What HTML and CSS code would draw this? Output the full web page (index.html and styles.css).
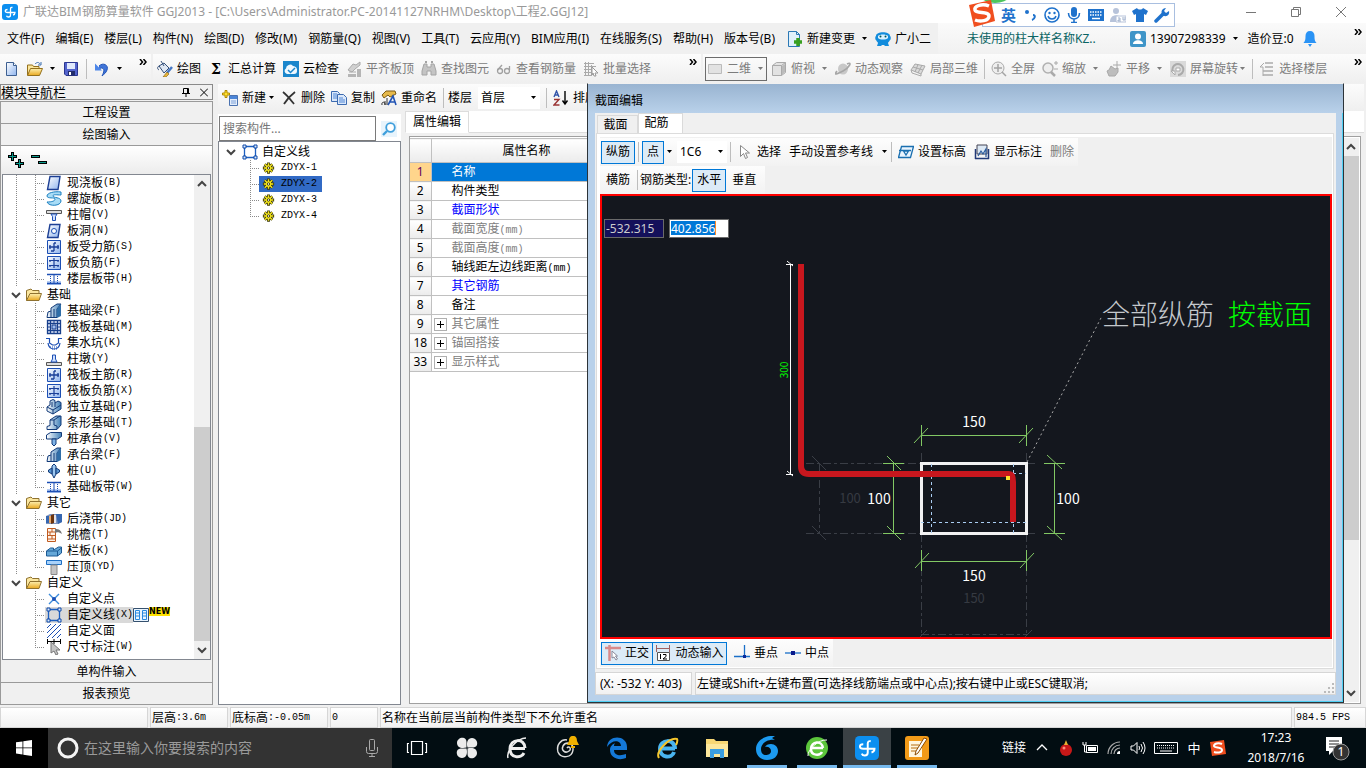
FILE: index.html
```html
<!DOCTYPE html>
<html lang="zh-CN">
<head>
<meta charset="utf-8">
<title>广联达BIM钢筋算量软件 GGJ2013</title>
<link rel="stylesheet" href="styles.css">
</head>
<body>
<svg class="defs" aria-hidden="true">
  <defs>
    <linearGradient id="gBlue" x1="0" y1="0" x2="1" y2="1"><stop offset="0" stop-color="#fff"/><stop offset="1" stop-color="#8fb4ee"/></linearGradient>
    <linearGradient id="gSteel" x1="0" y1="0" x2="1" y2="0"><stop offset="0" stop-color="#fff"/><stop offset="1" stop-color="#3f7fb8"/></linearGradient>
    <linearGradient id="gFold" x1="0" y1="0" x2="0" y2="1"><stop offset="0" stop-color="#fdf0b0"/><stop offset="1" stop-color="#e9a820"/></linearGradient>
  </defs>
  <symbol id="caret" viewBox="0 0 7 4"><path d="M1 0h5L3.500 3z" fill="currentColor"/></symbol>
  <symbol id="more" viewBox="0 0 8 6"><path d="M1 0l2.500 3L1 6M4.500 0L7 3 4.500 6" fill="none" stroke="#000" stroke-width="1.500"/></symbol>
  <symbol id="chev" viewBox="0 0 10 10"><path d="M1 3l4 4 4-4" fill="none" stroke="#444" stroke-width="2"/></symbol>
  <symbol id="app" viewBox="0 0 16 16"><rect width="16" height="16" rx="3" fill="#0c8ff0"/><path d="M10.500 3.500Q8.500 3 8.500 5V11q0 2-2 2-1.500 0-2-1.300M5.500 5.500Q3.300 5.500 3.300 7 3.300 8.500 5.500 8.500H13q0 2-2 2.500" fill="none" stroke="#fff" stroke-width="1.300"/></symbol>
  <symbol id="new" viewBox="0 0 16 16"><path d="M2.500 1.500h7l3 3v10h-10z" fill="url(#gBlue)" stroke="#3d5f91"/><path d="M9.500 1.500v3h3" fill="#fff" stroke="#3d5f91"/></symbol>
  <symbol id="open" viewBox="0 0 16 16"><path d="M.5 14V4h5l1 1.500H12V8" fill="#fbe59a" stroke="#94701c"/><path d="M.5 14.500l3-7H15.500l-3 7z" fill="url(#gFold)" stroke="#94701c"/><path d="M8 3c2-2 4-2 5 0M14 1v3h-3" fill="none" stroke="#3b6eb0"/></symbol>
  <symbol id="save" viewBox="0 0 16 16"><path d="M1.500 1.500h13v13H3l-1.500-1.500z" fill="#5263cc" stroke="#2a3590"/><path d="M4 2h8v6H4z" fill="#dfe8fb"/><path d="M5 10h7v4.500H5z" fill="#222c6b"/><path d="M6 11h2v3H6z" fill="#fff"/></symbol>
  <symbol id="undo" viewBox="0 0 16 16"><path d="M5 5c4-4 10-1 8 4-1 3-3 4-5 6 2-4 3-7 0-8-1 0-2 0-3 2" fill="#3f74d8" stroke="#2456b8"/><path d="M1 2.500V9.500h7z" fill="#4d86e8"/></symbol>
  <symbol id="paint" viewBox="0 0 16 16"><path d="M2 5l5-3 5 5-5 5z" fill="#dfe7f2" stroke="#35507a"/><path d="M3 5c-3 0-3 3-1 4M4 0l3 5" stroke="#35507a" fill="none"/><path d="M15 6l-5 6" stroke="#4778c4" stroke-width="2.500"/><path d="M10 11l2 2-3 3H6z" fill="#e9b63a" stroke="#7c5a12" stroke-width=".6"/></symbol>
  <symbol id="cloudchk" viewBox="0 0 16 16"><path d="M0 0h16v16H0z" fill="#1a86cc"/><path d="M4 13a3 3 0 0 1-1-5.500A4 4 0 0 1 10 5a4 4 0 0 1 4 5c0 2-1 3-3 3z" fill="#eef8ff"/><path d="M5 9l2.500 2.500L12 7" fill="none" stroke="#1a86cc" stroke-width="1.500"/></symbol>
  <symbol id="slab" viewBox="0 0 16 16"><path d="M2 9l5-6 3 1 4-3v3L9 8 6 11z" fill="#d0d0d0" stroke="#aaa"/><path d="M2 13h8v3H2zM11 8h4v8h-4z" fill="#b5b5b5"/><path d="M3 11h7" stroke="#aaa"/></symbol>
  <symbol id="bino" viewBox="0 0 16 16"><path d="M3 3h3v3h4V3h3l2 7v4h-5v-4H6v4H1v-4z" fill="#c4c4c4" stroke="#a4a4a4"/><path d="M4 1h2M10 1h2" stroke="#a4a4a4" stroke-width="2"/></symbol>
  <symbol id="glass" viewBox="0 0 16 16"><g fill="none" stroke="#a0a0a0" stroke-width="1.300"><circle cx="4" cy="10" r="2.500"/><circle cx="11" cy="10" r="2.500"/><path d="M1.500 9L6 4M13.500 9V5"/></g></symbol>
  <symbol id="batch" viewBox="0 0 16 16"><path d="M1 2.500h10M1 5.500h12M1 8.500h8M1 11.500h8M1 14.500h8M2.500 1v14M5.500 1v14M8.500 4v10" fill="none" stroke="#aaa"/><path d="M9 6l6 6h-3l1 3-2 0-1-3-1 2z" fill="#fff" stroke="#999"/></symbol>
  <symbol id="flat" viewBox="0 0 16 16"><path d="M1.500 3.500h13v9h-13z" fill="#e2e2e2" stroke="#bbb"/></symbol>
  <symbol id="cube" viewBox="0 0 16 16"><path d="M1.500 4.500l4-3h9v10l-4 3h-9z" fill="#e2e2e2" stroke="#aaa"/><path d="M1.500 4.500h9v10M10.500 4.500l4-3" fill="none" stroke="#aaa"/><path d="M11 5l3-2v8l-3 3z" fill="#bbb"/></symbol>
  <symbol id="orbit" viewBox="0 0 16 16"><ellipse cx="8" cy="8" rx="5" ry="5.500" fill="#c8c8c8"/><path d="M12 3c6-3 2 4-4 7s-10 5-6 0" fill="none" stroke="#a6a6a6" stroke-width="1.600"/></symbol>
  <symbol id="local3" viewBox="0 0 16 16"><path d="M1 9l4-6 10 2-4 8z" fill="#dadada" stroke="#aaa"/><path d="M3 6l10 3M8 3.500L5 11M12 4L8 12M1 9l1 3 9 3v-2" fill="none" stroke="#aaa"/></symbol>
  <symbol id="full" viewBox="0 0 16 16"><circle cx="7" cy="7" r="6" fill="#eee" stroke="#aaa"/><path d="M7 3v8M3 7h8M11 11l4 4" stroke="#a4a4a4" stroke-width="1.500"/></symbol>
  <symbol id="zoomi" viewBox="0 0 16 16"><circle cx="6" cy="7" r="5" fill="#eee" stroke="#b0b0b0" stroke-width="1.500"/><path d="M9 11l4 4" stroke="#aaa" stroke-width="2.500"/><path d="M12 2h4M14 0v4M12 8h4" stroke="#aaa"/></symbol>
  <symbol id="pan" viewBox="0 0 16 16"><path d="M3 15L1 10l2-1 2-4 4 3 3-1v4l-3 4z" fill="#bdbdbd" stroke="#a8a8a8"/><path d="M11 0v8M7 4h8" stroke="#aaa"/></symbol>
  <symbol id="rot" viewBox="0 0 16 16"><path d="M0 0h16v16H0z" fill="#dadada"/><path d="M3 11A5.500 5.500 0 1 1 8 14" fill="none" stroke="#aaa" stroke-width="2"/><path d="M6 7h4v3H6zM1 10h4v4z" fill="#fff" stroke="#aaa"/></symbol>
  <symbol id="floor" viewBox="0 0 16 16"><path d="M6 2h8M6 6h8M4 10h10M4 14h10" stroke="#aaa" stroke-width="1.500"/><path d="M5 2L1 6h3v9" fill="none" stroke="#aaa"/></symbol>
  <symbol id="docplus" viewBox="0 0 16 16"><path d="M1.500.5h8l3 3v12h-11z" fill="#dff0fb" stroke="#2b78b5"/><path d="M9.500.5v3h3" fill="none" stroke="#2b78b5"/><path d="M11 7v8M7 11h8" stroke="#38a020" stroke-width="3.500"/></symbol>
  <symbol id="robot" viewBox="0 0 16 16"><path d="M1 5c0-5 14-5 14 0 1 0 1 4 0 4-1 2-2 2-2 3l1 3H9.500v-1h-3v1H2l1-3c0-1-1-1-2-3-1 0-1-4 0-4z" fill="#128cdc"/><path d="M3 5c2-2 8-2 10 0v2c-2 2-8 2-10 0z" fill="#d9f1ff"/><circle cx="5.500" cy="5.500" r="1" fill="#055"/><circle cx="10.500" cy="5.500" r="1" fill="#055"/></symbol>
  <symbol id="user" viewBox="0 0 16 16"><rect width="16" height="16" rx="2" fill="#3f95c8"/><circle cx="8" cy="5.500" r="3" fill="#fff"/><path d="M3 13c0-5 10-5 10 0z" fill="#fff"/></symbol>
  <symbol id="bell" viewBox="0 0 16 16"><path d="M8 0c3 0 4.500 2 4.500 5 0 4 .5 5 2 7h-13c1.500-2 2-3 2-7C3.500 2 5 0 8 0z" fill="#2a93f5"/><path d="M6 13h4l-2 3z" fill="#2a93f5"/></symbol>
  <symbol id="additem" viewBox="0 0 16 16"><path d="M7.500 5.500h8v10h-8z" fill="#e3edfb" stroke="#4a72b0"/><path d="M8 6h7v3H8z" fill="#4c86d8"/><path d="M9 11h5M9 13h5" stroke="#7ea2d8"/><path d="M3 .5h2V3h2.500v2H5v2.500H3V5H.500V3H3z" fill="#ffe02e" stroke="#b08800"/></symbol>
  <symbol id="del" viewBox="0 0 16 16"><path d="M2 2c4 3 7 7 11 12M14 2C10 5 6 9 3 14" fill="none" stroke="#333" stroke-width="1.800"/></symbol>
  <symbol id="copy" viewBox="0 0 16 16"><path d="M.5 1.500h6l2 2v8h-8z" fill="#dbe8fa" stroke="#3d6bb0"/><path d="M6.500 4.500h6l3 3v7h-9z" fill="#dbe8fa" stroke="#3d6bb0"/><path d="M2 4h4M2 6h4M2 8h4M8 8h4M8 10h6M8 12h6" stroke="#4f86d6"/></symbol>
  <symbol id="ren" viewBox="0 0 16 16"><path d="M1 5l4-4h9l1 3-6 3-2-2-4 3z" fill="#e6b94a" stroke="#7a5a16"/><path d="M7 15l5-9 3 9M9 12h5" fill="none" stroke="#2254b4" stroke-width="1.600"/><path d="M1 15c-1-3 3-4 3-1v1M4 11v4M6 8v7" fill="none" stroke="#333"/></symbol>
  <symbol id="az" viewBox="0 0 16 16"><path d="M1 7l2.500-6L6 7M2 5h3" fill="none" stroke="#3355aa" stroke-width="1.400"/><path d="M1 9.500h5L1 15h5.500" fill="none" stroke="#993333" stroke-width="1.400"/><path d="M12 1v12M9.500 10.500L12 14l2.500-3.500" fill="none" stroke="#000" stroke-width="1.400"/></symbol>
  <symbol id="mag" viewBox="0 0 16 16"><path d="M0 0h16v16H0z" fill="#e8f4fc"/><circle cx="9.500" cy="6.500" r="4.300" fill="#fff" stroke="#3f9fdc" stroke-width="1.800"/><path d="M6 10l-4 4" stroke="#3f9fdc" stroke-width="2.400"/></symbol>
  <symbol id="plus2" viewBox="0 0 16 16"><path d="M4.500 0v9M0 4.500h9M11.500 7v9M7 11.500h9" stroke="#000" stroke-width="3"/><path d="M4.500 1v7M1 4.500h7M11.500 8v7M8 11.500h7" stroke="#0a9a8c"/></symbol>
  <symbol id="minus2" viewBox="0 0 16 16"><path d="M0 4.500h9M7 10.500h9" stroke="#000" stroke-width="3"/><path d="M1 4.500h7M8 10.500h7" stroke="#0a9a8c"/></symbol>
  <symbol id="folder" viewBox="0 0 16 16"><path d="M.5 13.500v-10L5 2l1.500 1.500H13V6" fill="#fbe7a0" stroke="#8f7230"/><path d="M.5 13.500L4 6.500h11.500l-2.500 7z" fill="url(#gFold)" stroke="#8f7230"/></symbol>
  <symbol id="t1" viewBox="0 0 16 16"><path d="M4 1.500h10L12 14.500H1.500z" fill="url(#gBlue)" stroke="#1c3f94" stroke-width="1.400"/></symbol>
  <symbol id="t2" viewBox="0 0 16 16"><path d="M15 1C8 0 1 2 1 5s8 1 8 3-3 3-8 3c2 5 14 4 14-1 0-4-8-3-8-5s4-1 8-1z" fill="#a8dcf6" stroke="#1a7fc0"/></symbol>
  <symbol id="t3" viewBox="0 0 16 16"><path d="M.5 3.500h15v3H.500z" fill="#ddd" stroke="#555"/><path d="M5 7h6L9.500 9.500v4h-3v-4z" fill="#cfe0ff" stroke="#1c4fb4"/></symbol>
  <symbol id="t4" viewBox="0 0 16 16"><path d="M4 1.500h10L12 14.500H1.500z" fill="url(#gBlue)" stroke="#1c3f94" stroke-width="1.400"/><circle cx="8" cy="8" r="2.500" fill="#fff" stroke="#1c4fb4"/></symbol>
  <symbol id="t5" viewBox="0 0 16 16"><path d="M1.500 1.500h13v13h-13z" fill="url(#gBlue)" stroke="#1c4fb4"/><path d="M3 8h10M4 6v4M8 4v8M8 4h2M5 12h3M12 6v4" fill="none" stroke="#1a3f98" stroke-width="1.300"/></symbol>
  <symbol id="t6" viewBox="0 0 16 16"><path d="M1.500 1.500h13v13h-13z" fill="url(#gBlue)" stroke="#1c4fb4"/><path d="M8 3v10M3 5.500h10M3 10.500h10M4 5v2M12 5v2M4 10v2M12 10v2" fill="none" stroke="#1a3f98" stroke-width="1.200"/></symbol>
  <symbol id="t7" viewBox="0 0 16 16"><path d="M1 10h14v4H1z" fill="#b8cef4"/><path d="M1 3.500h14M1 12.500h14" stroke="#1c4fb4" stroke-width="1.400"/><path d="M4.500 3v9M11.500 3v9" stroke="#1c4fb4" stroke-dasharray="1 1"/><path d="M8 3v9" stroke="#1c4fb4"/></symbol>
  <symbol id="t8" viewBox="0 0 16 16"><path d="M1 14.500L2 9l3-1V5l6-4h4l-4 5v8.500z" fill="url(#gSteel)" stroke="#123a78"/><path d="M11 6l4-5v12l-4 2z" fill="#2f6ea8"/><path d="M5 8v6M8 6v8" stroke="#123a78"/></symbol>
  <symbol id="t9" viewBox="0 0 16 16"><path d="M1.500 1.500h13v13h-13zM4.500 1v14M11.500 1v14M1 4.500h14M1 11.500h14" fill="#eaf1ff" stroke="#173f8c" stroke-width="1.300"/><path d="M6 6h4v4H6zM8 1v4M8 11v4M1 8h4M11 8h4" fill="#9dbcf0" stroke="#173f8c"/></symbol>
  <symbol id="t10" viewBox="0 0 16 16"><path d="M0 3.500h3.500V8l3 2h3l3-2V3.500H16M2 8c1 8 11 8 12 0" fill="none" stroke="#1c4fb4" stroke-width="1.200"/><path d="M4 12h8M6 14h5" stroke="#1c4fb4" stroke-dasharray="1 1"/></symbol>
  <symbol id="t11" viewBox="0 0 16 16"><path d="M.5 11.500h15v3H.500z" fill="#ddd" stroke="#555"/><path d="M5 11l1.500-3V4h3v4l1.500 3z" fill="#cfe0ff" stroke="#1c4fb4"/></symbol>
  <symbol id="t12" viewBox="0 0 16 16"><path d="M1 8l3-2V2l3-1.500 2 1V4l3-2 3 1.500V10l-8 5-6-3z" fill="url(#gSteel)" stroke="#123a78"/><path d="M1 8l6 3 8-5M7 11v4M6 3v5M9 4v4" fill="none" stroke="#123a78"/></symbol>
  <symbol id="t13" viewBox="0 0 16 16"><path d="M1 14.500v-3l3-1V5l6-4h5v9l-4 4.500z" fill="url(#gSteel)" stroke="#123a78"/><path d="M4 5h4v5l3 1v3M8 5l6-4" fill="none" stroke="#123a78"/></symbol>
  <symbol id="t14" viewBox="0 0 16 16"><path d="M.5 4l4-2.500h11v4l-4 2.500H.500z" fill="url(#gSteel)" stroke="#123a78"/><path d="M6 8v5l2 2 2-2V8z" fill="#7fb4e8" stroke="#123a78"/></symbol>
  <symbol id="t15" viewBox="0 0 16 16"><path d="M8 1l2 2v8l-2 4-2-4V3z" fill="#9cc8f0" stroke="#123a78"/><path d="M2.500 7l3.500-2v6L2.500 9zM13.500 7L10 5v6l3.500-2z" fill="#5a96d0" stroke="#123a78"/></symbol>
  <symbol id="t16" viewBox="0 0 16 16"><path d="M0 5l4-2h12v8l-4 2H0z" fill="#7c94c0"/><path d="M5 4l3-1v9l-3 1z" fill="#6b3510"/><path d="M0 5h5v7H0zM10 3h6v8l-4 2z" fill="#3566b0"/><path d="M3 5h2v7H3z" fill="#e8a868"/><path d="M8 4h2v8H8z" fill="#e4e4ec"/></symbol>
  <symbol id="t17" viewBox="0 0 16 16"><path d="M1.500 1.500h8v13h-8zM1 5h9M1 8.500h9M1 12h9M6 2v3M4 5v3M6 9v3" fill="#fff2e6" stroke="#c05a20"/><path d="M9 2c4 0 6 1 7 5-3-2-5-2-7-1z" fill="#777"/></symbol>
  <symbol id="t18" viewBox="0 0 16 16"><path d="M.5 8l4-3h3v2l5-3h3v6l-4 3H.500z" fill="#66a8d8" stroke="#1c5a94"/><path d="M.5 8h11v5M11.500 8l4-3" fill="none" stroke="#1c5a94"/></symbol>
  <symbol id="t19" viewBox="0 0 16 16"><path d="M.5 1.500h15v4H.500z" fill="#a9d2fa" stroke="#1c6fc4"/><path d="M5 6h6v9.500H5z" fill="#c4c4c4" stroke="#888"/></symbol>
  <symbol id="t20" viewBox="0 0 16 16"><path d="M3 3l10 10M13 3L3 13" stroke="#3a8ada" stroke-width="1.400"/><circle cx="8" cy="8" r="2" fill="#1c4fb4"/></symbol>
  <symbol id="t21" viewBox="0 0 16 16"><path d="M2.500 2.500h11v11h-11z" fill="none" stroke="#1c5fc0" stroke-width="1.300"/><path d="M1 1h3v3H1zM12 1h3v3h-3zM1 12h3v3H1zM12 12h3v3h-3z" fill="#dce9fb" stroke="#0c48a8"/></symbol>
  <symbol id="t22" viewBox="0 0 16 16"><path d="M1 5l4-4M1 10l9-9M1 15L15 1M6 15l9-9M11 15l4-4" stroke="#1c4fb4"/></symbol>
  <symbol id="t23" viewBox="0 0 16 16"><path d="M1 2.500h14M1.500 0v5M14.500 0v5M8 0v5" stroke="#000"/><path d="M5 3v11l3-2 2 4 2-1-2-4h4z" fill="#c4c4c4" stroke="#777"/></symbol>
  <symbol id="tcols" viewBox="0 0 16 16"><path d="M.5 1.500h15v13H.500z" fill="#eaf5ff" stroke="#35506e"/><path d="M2.500 3.500h4v9h-4zM9.500 3.500h4v9h-4zM2 6h5M9 6h5M2 9h5M9 9h5" fill="none" stroke="#2a8ae0"/></symbol>
  <symbol id="gear" viewBox="0 0 16 16"><g stroke="#3a3600" stroke-width="3"><path d="M8 2v12M2 8h12M4 4l8 8M12 4l-8 8"/></g><path d="M8 3v10M3 8h10M4 4l8 8M12 4l-8 8" stroke="#f4e61e" stroke-width="1.400"/><circle cx="8" cy="8" r="3" fill="#f4e61e"/><circle cx="8" cy="8" r="1.300" fill="#fff" stroke="#3a3600"/></symbol>
  <symbol id="cur" viewBox="0 0 16 16"><path d="M3.500 1.500v11l3-3 2 5 2-1-2-4.500h4z" fill="#fff" stroke="#888"/></symbol>
  <symbol id="elev" viewBox="0 0 16 16"><path d="M3.500 2.500h12l-3 11H.500z" fill="#eaf5ff" stroke="#1a6fb0" stroke-width="1.300"/><path d="M1 6.500h12M5.500 7l2.500 4 2.500-4z" stroke="#1a6fb0" fill="none" stroke-width="1.300"/></symbol>
  <symbol id="showdim" viewBox="0 0 16 16"><path d="M3 1h10v9H3z" fill="#dce8f4" stroke="#445"/><path d="M1.500 5v10M14.500 5v10M1 14.500h14" stroke="#223a78" stroke-width="1.500"/><path d="M4 12l3-5 2 3 3-5v8" fill="none" stroke="#2a5a9c" stroke-width="1.200"/></symbol>
  <symbol id="ortho" viewBox="0 0 16 16"><path d="M0 3h16M4.500 0v16" stroke="#d98a8a" stroke-width="2.500"/><path d="M7 6v7l2-1 2 3 1.500-1-2-3h2z" fill="#fff" stroke="#889"/></symbol>
  <symbol id="dyn" viewBox="0 0 16 16"><path d="M1.500 0v7M14.500 0v7M1 3.500h14" stroke="#a06060"/><path d="M2.500 7.500h12v8h-12z" fill="#fff" stroke="#555"/><path d="M5.500 9v5M8 9.500h3v2l-3 2.500h4" fill="none" stroke="#000"/></symbol>
  <symbol id="perp" viewBox="0 0 16 16"><path d="M0 11.500h16M10.500 0v12" stroke="#1a6fc8" stroke-width="1.300"/><path d="M9 10h3v3H9z" fill="#0a2a9c"/></symbol>
  <symbol id="mid" viewBox="0 0 16 16"><path d="M0 8h16" stroke="#1a6fc8" stroke-width="1.300"/><path d="M6 6h4v4H6z" fill="#0a1a8c"/></symbol>
</svg>

<div class="app">
  <header class="titlebar">
    <svg class="i"><use href="#app"/></svg>
    <h1>广联达BIM钢筋算量软件 GGJ2013 - [C:\Users\Administrator.PC-20141127NRHM\Desktop\工程2.GGJ12]</h1>
    <div class="winbtns">
      <button aria-label="最小化"><svg viewBox="0 0 10 10"><path d="M0 5.500h10" stroke="#777"/></svg></button>
      <button aria-label="还原"><svg viewBox="0 0 10 10"><path d="M.5 2.500h7v7h-7zM2.500 2.500v-2h7v7h-2" fill="none" stroke="#777"/></svg></button>
      <button aria-label="关闭"><svg viewBox="0 0 10 10"><path d="M0 0l10 10M10 0L0 10" stroke="#777"/></svg></button>
    </div>
  </header>

  <nav class="menubar">
    <div class="menus">
      <button>文件(F)</button><button>编辑(E)</button><button>楼层(L)</button><button>构件(N)</button><button>绘图(D)</button><button>修改(M)</button><button>钢筋量(Q)</button><button>视图(V)</button><button>工具(T)</button><button>云应用(Y)</button><button>BIM应用(I)</button><button>在线服务(S)</button><button>帮助(H)</button><button>版本号(B)</button>
    </div>
    <button class="tb"><svg class="i"><use href="#docplus"/></svg>新建变更<svg class="c"><use href="#caret"/></svg></button>
    <button class="tb"><svg class="i"><use href="#robot"/></svg>广小二</button>
    <a class="notice" href="#">未使用的柱大样名称KZ..</a>
    <div class="account">
      <button class="tb"><svg class="i"><use href="#user"/></svg>13907298339<svg class="c"><use href="#caret"/></svg></button>
      <span class="beans">造价豆:0</span>
      <svg class="i"><use href="#bell"/></svg>
      <svg class="more"><use href="#more"/></svg>
    </div>
  </nav>

  <div class="toolrow">
    <div class="strip files">
      <button class="tb" aria-label="新建"><svg class="i"><use href="#new"/></svg></button>
      <button class="tb" aria-label="打开"><svg class="i"><use href="#open"/></svg><svg class="c"><use href="#caret"/></svg></button>
      <button class="tb" aria-label="保存"><svg class="i"><use href="#save"/></svg></button>
      <i class="sep"></i>
      <button class="tb" aria-label="撤销"><svg class="i"><use href="#undo"/></svg><svg class="c"><use href="#caret"/></svg></button>
      <svg class="more"><use href="#more"/></svg>
    </div>
    <div class="strip ops">
      <button class="tb"><svg class="i"><use href="#paint"/></svg>绘图</button>
      <button class="tb"><b class="sigma">Σ</b>汇总计算</button>
      <button class="tb"><svg class="i"><use href="#cloudchk"/></svg>云检查</button>
      <button class="tb off"><svg class="i"><use href="#slab"/></svg>平齐板顶</button>
      <button class="tb off"><svg class="i"><use href="#bino"/></svg>查找图元</button>
      <button class="tb off"><svg class="i"><use href="#glass"/></svg>查看钢筋量</button>
      <button class="tb off"><svg class="i"><use href="#batch"/></svg>批量选择</button>
      <svg class="more"><use href="#more"/></svg>
    </div>
    <div class="strip views">
      <button class="tb off boxed"><svg class="i"><use href="#flat"/></svg>二维<svg class="c"><use href="#caret"/></svg></button>
      <button class="tb off"><svg class="i"><use href="#cube"/></svg>俯视<svg class="c"><use href="#caret"/></svg></button>
      <button class="tb off"><svg class="i"><use href="#orbit"/></svg>动态观察</button>
      <button class="tb off"><svg class="i"><use href="#local3"/></svg>局部三维</button>
      <i class="sep"></i>
      <button class="tb off"><svg class="i"><use href="#full"/></svg>全屏</button>
      <button class="tb off"><svg class="i"><use href="#zoomi"/></svg>缩放<svg class="c"><use href="#caret"/></svg></button>
      <button class="tb off"><svg class="i"><use href="#pan"/></svg>平移<svg class="c"><use href="#caret"/></svg></button>
      <button class="tb off tight"><svg class="i"><use href="#rot"/></svg>屏幕旋转<svg class="c"><use href="#caret"/></svg></button>
      <i class="sep"></i>
      <button class="tb off"><svg class="i"><use href="#floor"/></svg>选择楼层</button>
      <svg class="more"><use href="#more"/></svg>
    </div>
  </div>

  <main class="work">
    <aside class="navigator">
      <div class="dockhead"><span>模块导航栏</span>
        <button aria-label="固定"><svg viewBox="0 0 8 9"><path d="M1.500 5V.500h5V5M5.500 0v5M0 5.500h8M4 6v3" fill="none" stroke="#000"/></svg></button>
        <button aria-label="关闭"><svg viewBox="0 0 8 9"><path d="M0 .5l8 8M8 .5l-8 8" stroke="#000"/></svg></button>
      </div>
      <div class="navbody">
        <button class="navbtn">工程设置</button>
        <button class="navbtn">绘图输入</button>
        <div class="expand"><button aria-label="展开"><svg class="i"><use href="#plus2"/></svg></button><button aria-label="折叠"><svg class="i"><use href="#minus2"/></svg></button></div>
        <div class="treebox">
          <ul class="tree">
            <li class="group"><ul>
              <li><span class="node"><svg class="i"><use href="#t1"/></svg>现浇板<s>(B)</s></span></li>
              <li><span class="node"><svg class="i"><use href="#t2"/></svg>螺旋板<s>(B)</s></span></li>
              <li><span class="node"><svg class="i"><use href="#t3"/></svg>柱帽<s>(V)</s></span></li>
              <li><span class="node"><svg class="i"><use href="#t4"/></svg>板洞<s>(N)</s></span></li>
              <li><span class="node"><svg class="i"><use href="#t5"/></svg>板受力筋<s>(S)</s></span></li>
              <li><span class="node"><svg class="i"><use href="#t6"/></svg>板负筋<s>(F)</s></span></li>
              <li><span class="node"><svg class="i"><use href="#t7"/></svg>楼层板带<s>(H)</s></span></li>
            </ul></li>
            <li class="group"><div class="cat"><svg class="ch"><use href="#chev"/></svg><svg class="i"><use href="#folder"/></svg>基础</div><ul>
              <li><span class="node"><svg class="i"><use href="#t8"/></svg>基础梁<s>(F)</s></span></li>
              <li><span class="node"><svg class="i"><use href="#t9"/></svg>筏板基础<s>(M)</s></span></li>
              <li><span class="node"><svg class="i"><use href="#t10"/></svg>集水坑<s>(K)</s></span></li>
              <li><span class="node"><svg class="i"><use href="#t11"/></svg>柱墩<s>(Y)</s></span></li>
              <li><span class="node"><svg class="i"><use href="#t5"/></svg>筏板主筋<s>(R)</s></span></li>
              <li><span class="node"><svg class="i"><use href="#t6"/></svg>筏板负筋<s>(X)</s></span></li>
              <li><span class="node"><svg class="i"><use href="#t12"/></svg>独立基础<s>(P)</s></span></li>
              <li><span class="node"><svg class="i"><use href="#t13"/></svg>条形基础<s>(T)</s></span></li>
              <li><span class="node"><svg class="i"><use href="#t14"/></svg>桩承台<s>(V)</s></span></li>
              <li><span class="node"><svg class="i"><use href="#t8"/></svg>承台梁<s>(F)</s></span></li>
              <li><span class="node"><svg class="i"><use href="#t15"/></svg>桩<s>(U)</s></span></li>
              <li><span class="node"><svg class="i"><use href="#t7"/></svg>基础板带<s>(W)</s></span></li>
            </ul></li>
            <li class="group"><div class="cat"><svg class="ch"><use href="#chev"/></svg><svg class="i"><use href="#folder"/></svg>其它</div><ul>
              <li><span class="node"><svg class="i"><use href="#t16"/></svg>后浇带<s>(JD)</s></span></li>
              <li><span class="node"><svg class="i"><use href="#t17"/></svg>挑檐<s>(T)</s></span></li>
              <li><span class="node"><svg class="i"><use href="#t18"/></svg>栏板<s>(K)</s></span></li>
              <li><span class="node"><svg class="i"><use href="#t19"/></svg>压顶<s>(YD)</s></span></li>
            </ul></li>
            <li class="group end"><div class="cat"><svg class="ch"><use href="#chev"/></svg><svg class="i"><use href="#folder"/></svg>自定义</div><ul>
              <li><span class="node"><svg class="i"><use href="#t20"/></svg>自定义点</span></li>
              <li><span class="node on"><svg class="i"><use href="#t21"/></svg>自定义线<s>(X)</s></span><svg class="i"><use href="#tcols"/></svg><em class="newtag">NEW</em></li>
              <li><span class="node"><svg class="i"><use href="#t22"/></svg>自定义面</span></li>
              <li><span class="node"><svg class="i"><use href="#t23"/></svg>尺寸标注<s>(W)</s></span></li>
            </ul></li>
          </ul>
          <div class="vscroll nav-scroll"><svg class="ch up"><use href="#chev"/></svg><i class="thumb"></i><svg class="ch"><use href="#chev"/></svg></div>
        </div>
        <button class="navbtn">单构件输入</button>
        <button class="navbtn">报表预览</button>
      </div>
    </aside>

    <section class="center">
      <div class="strip comps">
        <button class="tb"><svg class="i"><use href="#additem"/></svg>新建<svg class="c"><use href="#caret"/></svg></button>
        <button class="tb"><svg class="i"><use href="#del"/></svg>删除</button>
        <button class="tb"><svg class="i"><use href="#copy"/></svg>复制</button>
        <button class="tb"><svg class="i"><use href="#ren"/></svg>重命名</button>
        <i class="sep"></i>
        <label for="storey">楼层</label>
        <span class="combo wide"><select id="storey"><option>首层</option></select><svg class="c"><use href="#caret"/></svg></span>
        <i class="sep"></i>
        <button class="tb"><svg class="i"><use href="#az"/></svg>排序</button>
      </div>
      <div class="panes">
        <div class="complist">
          <div class="search"><input type="text" placeholder="搜索构件..." aria-label="搜索构件"><button aria-label="搜索"><svg class="i"><use href="#mag"/></svg></button></div>
          <div class="compbox">
            <div class="root"><svg class="ch"><use href="#chev"/></svg><svg class="i"><use href="#t21"/></svg>自定义线</div>
            <ul class="items">
              <li><span class="item"><svg class="i"><use href="#gear"/></svg><s>ZDYX-1</s></span></li>
              <li><span class="item sel"><svg class="i"><use href="#gear"/></svg><s>ZDYX-2</s></span></li>
              <li><span class="item"><svg class="i"><use href="#gear"/></svg><s>ZDYX-3</s></span></li>
              <li><span class="item"><svg class="i"><use href="#gear"/></svg><s>ZDYX-4</s></span></li>
            </ul>
          </div>
        </div>
        <div class="props">
          <div class="tabs"><button class="tab on">属性编辑</button></div>
          <div class="gridbox">
            <table class="grid">
              <colgroup><col class="n"><col class="k"><col></colgroup>
              <thead><tr><th></th><th>属性名称</th><th></th></tr></thead>
              <tbody>
                <tr class="cur"><th>1</th><td>名称</td><td></td></tr>
                <tr><th>2</th><td>构件类型</td><td></td></tr>
                <tr class="link"><th>3</th><td>截面形状</td><td></td></tr>
                <tr class="dim"><th>4</th><td>截面宽度<s>(mm)</s></td><td></td></tr>
                <tr class="dim"><th>5</th><td>截面高度<s>(mm)</s></td><td></td></tr>
                <tr><th>6</th><td>轴线距左边线距离<s>(mm)</s></td><td></td></tr>
                <tr class="link"><th>7</th><td>其它钢筋</td><td></td></tr>
                <tr><th>8</th><td>备注</td><td></td></tr>
                <tr class="dim fold"><th>9</th><td><button aria-label="展开"></button>其它属性</td><td></td></tr>
                <tr class="dim fold"><th>18</th><td><button aria-label="展开"></button>锚固搭接</td><td></td></tr>
                <tr class="dim fold"><th>33</th><td><button aria-label="展开"></button>显示样式</td><td></td></tr>
              </tbody>
            </table>
            <div class="vscroll prop-scroll"><svg class="ch up"><use href="#chev"/></svg><i class="thumb"></i><svg class="ch"><use href="#chev"/></svg></div>
          </div>
        </div>
      </div>
    </section>
  </main>

  <footer class="status">
    <span class="cell s1"></span><span class="cell s2">层高<s>:3.6m</s></span><span class="cell s3">底标高<s>:-0.05m</s></span><span class="cell s4"><s>0</s></span><span class="cell s5">名称在当前层当前构件类型下不允许重名</span><span class="cell s6"><s>984.5 FPS</s></span>
  </footer>

  <section class="dialog" role="dialog" aria-labelledby="dlgtitle">
    <h2 id="dlgtitle">截面编辑</h2>
    <div class="client">
      <div class="dtabs"><button class="dtab">截面</button><button class="dtab on">配筋</button></div>
      <div class="page">
        <div class="pagein">
          <div class="strip dt">
            <button class="tg">纵筋</button><i class="sep"></i><button class="tg small">点</button><svg class="c"><use href="#caret"/></svg>
            <span class="combo"><select aria-label="钢筋信息"><option>1C6</option></select><svg class="c"><use href="#caret"/></svg></span>
            <i class="sep"></i>
            <button class="tb"><svg class="i"><use href="#cur"/></svg>选择</button>
            <button class="tb wide-gap">手动设置参考线<svg class="c"><use href="#caret"/></svg></button>
            <i class="sep"></i>
            <button class="tb"><svg class="i"><use href="#elev"/></svg>设置标高</button>
            <button class="tb"><svg class="i"><use href="#showdim"/></svg>显示标注</button>
            <button class="tb off">删除</button>
          </div>
          <div class="strip dt second">
            <button class="tg plain">横筋</button><i class="sep"></i><span>钢筋类型:</span><button class="tg">水平</button><button class="tg plain">垂直</button>
          </div>
          <div class="canvas">
            <svg class="drawing" viewBox="602 196 728 441" preserveAspectRatio="xMinYMin slice">
              <g fill="none" stroke="#3a3e46" stroke-dasharray="8 3 3 3">
                <path d="M806 463.500h115M806 533.500h115M819.500 463v70M921.500 534v101M1026.500 534v101M921 634.500h106M921.500 453v10M1026.500 453v10M1027 463.500h10M1027 533.500h10"/>
                <path d="M812 456l14 14M812 526l14 14M920 637l7-7M1025 637l7-7" stroke-dasharray="none"/>
              </g>
              <g fill="none" stroke="#82c864">
                <path d="M921 435.500h106M921.500 425v21M1026.500 425v21M914 443l14-15M1019 443l14-15"/>
                <path d="M921 561.500h106M921.500 550v21M1026.500 550v21M915 568l14-15M1020 568l14-15"/>
                <path d="M893.500 463v71M883 463.500h21M883 533.500h21M887 456l14 14M887 526l14 14"/>
                <path d="M1054.500 463v71M1044 463.500h21M1044 533.500h21M1047 455l15 14M1047 526l15 14"/>
              </g>
              <path d="M790.500 264v210M786 264.500h7M786 474.500h7M787 261l6 5M787 471l6 5" fill="none" stroke="#fff"/>
              <path d="M1027 462l75-146" fill="none" stroke="#aaa" stroke-dasharray="2 3"/>
              <path d="M921.500 463.500h105v70h-105z" fill="none" stroke="#f2f2f2" stroke-width="3"/>
              <path d="M931.500 464v69M1013.500 464v69M921 522.500h105M1013 473.500h13" fill="none" stroke="#a9cdf2" stroke-dasharray="3 3"/>
              <path d="M801 264v202q0 8 8 8h200q4 0 4 8v40" fill="none" stroke="#c8171e" stroke-width="6"/>
              <path d="M1006 476h4v4h-4z" fill="#ffe12b"/>
              <g class="dims" fill="#fff" text-anchor="middle">
                <text x="974" y="427">150</text><text x="974" y="581">150</text><text x="879" y="504">100</text><text x="1068" y="504">100</text>
                <g class="ghost"><text x="850" y="503">100</text><text x="974" y="603">150</text></g>
              </g>
              <text class="len" text-anchor="middle" transform="rotate(-90 788 370)" x="788" y="370">300</text>
              <text class="note" x="1102" y="325">全部纵筋</text><text class="note green" x="1228" y="325">按截面</text>
            </svg>
            <div class="coords"><input type="text" class="cx" value="-532.315" aria-label="X坐标"><input type="text" class="cy" value="402.856" aria-label="Y坐标"></div>
          </div>
          <div class="strip dt snap">
            <button class="tg"><svg class="i"><use href="#ortho"/></svg>正交</button><button class="tg"><svg class="i"><use href="#dyn"/></svg>动态输入</button>
            <button class="tb"><svg class="i"><use href="#perp"/></svg>垂点</button><button class="tb"><svg class="i"><use href="#mid"/></svg>中点</button>
          </div>
        </div>
      </div>
      <div class="dstatus"><span class="cell pos">(X: -532 Y: 403)</span><span class="cell hint">左键或Shift+左键布置(可选择线筋端点或中心点);按右键中止或ESC键取消;<svg class="grip" viewBox="0 0 12 12"><path d="M9 1h2v2H9zM5 5h2v2H5zM9 5h2v2H9zM1 9h2v2H1zM5 9h2v2H5zM9 9h2v2H9z" fill="#bbb"/></svg></span></div>
    </div>
  </section>
</div>

<div class="ime">
  <i class="blob"></i>
  <svg class="slogo" viewBox="0 0 28 28"><path d="M1 5l22-5 4 21-21 6z" fill="#f04e1e"/><path d="M21 6C14 3 6 6 7 10s14 1 14 6-9 6-14 4" fill="none" stroke="#fff" stroke-width="3.500"/></svg>
  <div class="imebar">
    <b>英</b>
    <svg viewBox="0 0 16 16"><circle cx="5" cy="5" r="2" fill="#1f72cc"/><path d="M11 8c3 0 2 4-1 5" fill="none" stroke="#1f72cc" stroke-width="2"/></svg>
    <svg viewBox="0 0 16 16"><circle cx="8" cy="8" r="7" fill="none" stroke="#1f72cc" stroke-width="1.600"/><circle cx="5.500" cy="6" r="1.200" fill="#1f72cc"/><circle cx="10.500" cy="6" r="1.200" fill="#1f72cc"/><path d="M4 9c1 4 7 4 8 0" fill="none" stroke="#1f72cc" stroke-width="1.400"/></svg>
    <svg viewBox="0 0 16 16"><rect x="5" y="0" width="6" height="10" rx="3" fill="#1f72cc"/><path d="M2.500 6c0 8 11 8 11 0M8 12v3M5 15.500h6" fill="none" stroke="#1f72cc" stroke-width="1.600"/></svg>
    <svg viewBox="0 0 16 16"><path d="M0 2h16v12H0z" fill="#1f72cc"/><path d="M2 5h12M2 8h12" stroke="#fff" stroke-width="1.500" stroke-dasharray="1.500 1"/><path d="M4 11.500h8" stroke="#fff" stroke-width="1.500"/></svg>
    <svg viewBox="0 0 16 16"><circle cx="6" cy="4" r="3" fill="#b7c3da"/><path d="M0 15c0-8 9-8 11-4v4z" fill="#b7c3da"/><path d="M6 9h10v6H6z" fill="#fff" stroke="#b7c3da"/><path d="M8 11h2v2H8v1h3M13 10v3h2v-3" stroke="#9fb0cc" fill="none"/></svg>
    <svg viewBox="0 0 16 16"><path d="M5 1c1 2 5 2 6 0l5 3-2 4-2-1v8H4V7L2 8 0 4z" fill="#1f72cc"/></svg>
    <svg viewBox="0 0 16 16"><path d="M2 14l7-7" stroke="#1f72cc" stroke-width="3.500" stroke-linecap="round"/><path d="M12 1c-4 0-6 4-3 7s7 0 6-4l-3 2-2-2z" fill="#1f72cc"/></svg>
  </div>
</div>

<footer class="taskbar">
  <button class="start" aria-label="开始"><svg viewBox="0 0 16 16"><path d="M0 2.300l6.500-.9v6.100H0zM7.300 1.300L16 0v7.500H7.300zM0 8.300h6.500v6.100L0 13.500zM7.300 8.300H16V16l-8.700-1.300z" fill="#fff"/></svg></button>
  <label class="cortana"><svg class="ring" viewBox="0 0 22 22"><circle cx="11" cy="11" r="9" fill="none" stroke="#f4f4f4" stroke-width="3"/></svg><input type="text" placeholder="在这里输入你要搜索的内容"><svg class="mic" viewBox="0 0 12 18"><rect x="3.500" y=".5" width="5" height="11" rx="1" fill="none" stroke="#aaa"/><path d="M.5 8v4.500q0 2 2 2h7q2 0 2-2V8M6 15v2.500M3 17.500h6" fill="none" stroke="#aaa"/></svg></label>
  <div class="tasks">
    <button aria-label="任务视图"><svg viewBox="0 0 24 24"><path d="M6.500 5.500h11v13h-11zM4 7.500H2.500v9H4M20 7.500h1.500v9H20" fill="none" stroke="#fff" stroke-width="1.200"/></svg></button>
    <button aria-label="应用"><svg viewBox="0 0 24 24"><g fill="#ececec"><path d="M11.500 11.500C6 13 2 11 2 7s4-6 7-5 2.500 4 2.500 9.500z"/><path d="M12.500 11.500C11 6 13 2 17 2s6 4 5 7-4 2.500-9.500 2.500z"/><path d="M12.500 12.500C18 11 22 13 22 17s-4 6-7 5-2.500-4-2.500-9.500z"/><path d="M11.500 12.500C13 18 11 22 7 22s-6-4-5-7 4-2.500 9.500-2.500z"/></g></svg></button>
    <button aria-label="浏览器"><svg viewBox="0 0 24 24"><path d="M20 12c0-10-15-10-15 1 0 9 11 10 14 4M5.500 12.500H20" fill="none" stroke="#eee" stroke-width="3"/><path d="M3 22C1 15 12 2 21 2" fill="none" stroke="#eee" stroke-width="1.500"/></svg></button>
    <button aria-label="音乐"><svg viewBox="0 0 24 24"><path d="M12 12c2-3 5 1 2 3-4 3-8-1-6-5 3-5 11-3 10 4-1 8-12 9-15 2C1 9 6 3 12 4" fill="none" stroke="#ddd" stroke-width="1.500"/><path d="M18 0c3 0 4 2 4 5l2 4H12l2-4c0-3 1-5 4-5zM16 10h4v2h-4z" fill="#f0b000"/></svg></button>
    <button aria-label="Edge"><svg viewBox="0 0 24 24"><path d="M2 11C3-2 22-1 22 11v3H9c0 6 7 6 12 4v4C14 25 5 22 5 14c0-4 3-6 5-7-1 1-1 3-1 3h7C16 4 7 3 2 11z" fill="#1478d8"/></svg></button>
    <button aria-label="Internet Explorer"><svg viewBox="0 0 24 24"><path d="M20 13c0-11-15-10-15 0 0 9 12 10 14 3M6 12.500h14" fill="none" stroke="#49b4ef" stroke-width="4"/><path d="M4 22C0 16 14 1 22 3c1 2 0 4-1 6" fill="none" stroke="#f6c62c" stroke-width="2"/></svg></button>
    <button aria-label="文件资源管理器"><svg viewBox="0 0 24 24"><path d="M1 3h8l2 2h12v16H1z" fill="#f7d774"/><path d="M1 8h22v13H1z" fill="#fce79c"/><path d="M5 13h14v9h-4v-4H9v4H5z" fill="#3a9de0"/></svg></button>
    <button class="run" aria-label="广联达"><svg viewBox="0 0 24 24"><path d="M20 0C9-1 1 5 1 13c0 7 5 11 11 11 7 0 11-4 11-9 0-4-3-7-7-7-3 0-5 1-6 3 3-1 6 1 6 4s-3 4-5 4c-4 0-5-3-5-6C6 7 13 3 20 4l-3-2z" fill="#1c9af0"/></svg></button>
    <button class="run" aria-label="安全浏览器"><svg viewBox="0 0 24 24"><circle cx="12" cy="12" r="11" fill="#5cc63c"/><path d="M18 12c-1-8-12-7-12 1 0 7 9 7 11 3M6 12h12" fill="none" stroke="#fff" stroke-width="2.500"/><path d="M3 20C2 14 14 3 22 4" fill="none" stroke="#fff"/></svg></button>
    <button class="run active" aria-label="GGJ2013"><svg viewBox="0 0 16 16"><use href="#app"/></svg></button>
    <button class="run" aria-label="编辑器"><svg viewBox="0 0 24 24"><rect width="24" height="24" rx="3" fill="#f29a18"/><path d="M4 5h13v16H4z" fill="#fff6df"/><path d="M6 9h8M6 12h7M6 15h5" stroke="#b56c10"/><path d="M22 3l-9 14-3 2 1-4L19 2z" fill="#fff" stroke="#8a4a00"/></svg></button>
  </div>
  <div class="tray">
    <span>链接</span>
    <svg viewBox="0 0 16 16"><path d="M3 10l5-5 5 5" fill="none" stroke="#fff" stroke-width="1.300"/></svg>
    <svg viewBox="0 0 16 16"><circle cx="8" cy="10" r="6" fill="#c81818"/><path d="M6 5l2-5 2 5z" fill="#e8b030"/><circle cx="6" cy="8" r="1.500" fill="#ff8a7a"/></svg>
    <svg viewBox="0 0 16 16"><path d="M4.500 5.500h11v7h-11z" fill="none" stroke="#fff"/><path d="M6 7h8v4H6z" fill="#fff"/><path d="M1 2v3h3V2M2.500 5v7H5" fill="none" stroke="#fff"/></svg>
    <svg viewBox="0 0 16 16"><g fill="none" stroke="#aaa" stroke-width="1.200"><path d="M2 14A12 12 0 0 1 14 2M5 14a9 9 0 0 1 9-9M8 14a6 6 0 0 1 6-6"/></g><path d="M11 14a3 3 0 0 1 3-3v3z" fill="#fff"/></svg>
    <svg viewBox="0 0 16 16"><path d="M1 6h2.500L7 2.500v11L3.500 10H1zM9 6q1 2 0 4M11 4q3 4 0 8M13 2q4 6 0 12" fill="none" stroke="#fff"/></svg>
    <svg class="kb" viewBox="0 0 24 16"><path d="M.5 2.500h23v11H.500z" fill="none" stroke="#fff"/><path d="M3 5.500h18M3 8h18" stroke="#fff" stroke-dasharray="1 1"/><path d="M6 11h12" stroke="#fff"/></svg>
    <span class="zh">中</span>
    <svg viewBox="0 0 16 16"><path d="M0 2l14-2 2 14-14 2z" fill="#f04e1e"/><path d="M12 4C8 2 4 4 4 6s8 1 8 4-5 3-8 2" fill="none" stroke="#fff" stroke-width="2"/></svg>
    <time>17:23<br>2018/7/16</time>
    <svg class="act" viewBox="0 0 26 26"><path d="M2 2h16v14H9l-4 4v-4H2z" fill="#fff"/><path d="M5 6h10M5 9h10M5 12h8" stroke="#222"/><circle cx="17" cy="17" r="8" fill="#333" stroke="#999"/><text x="17" y="21" text-anchor="middle" fill="#fff">1</text></svg>
  </div>
</footer>
</body>
</html>
```
FILE: styles.css
```css
* { box-sizing: border-box; }
body {
  margin: 0;
  height: 100vh;
  display: flex;
  flex-direction: column;
  overflow: hidden;
  background: #f0f0f0;
  color: #000;
  font: 12px/16px "Noto Sans", "Noto Sans CJK SC", sans-serif;
}
button, input, select { font: inherit; color: inherit; margin: 0; padding: 0; border: 0; background: none; }
button { white-space: nowrap; }
ul { list-style: none; margin: 0; padding: 0; }
s { text-decoration: none; font: 10px/16px "Liberation Mono", monospace; }
svg { flex: none; display: block; }
.defs { position: absolute; width: 0; height: 0; }
.i { width: 16px; height: 16px; }
.c { width: 7px; height: 4px; }
.ch { width: 10px; height: 10px; }
.up { transform: rotate(180deg); }
.more { width: 8px; height: 6px; margin-left: auto; align-self: flex-start; }

.app { position: relative; flex: 1; min-height: 0; display: flex; flex-direction: column; }

.titlebar { height: 23px; flex: none; display: flex; align-items: center; gap: 5px; padding-left: 2px; background: #fff; }
.titlebar h1 { margin: 0; font-size: 12px; font-weight: 400; color: #999; white-space: nowrap; }
.winbtns { margin-left: auto; display: flex; gap: 35px; padding-right: 20px; }
.winbtns button, .winbtns svg { width: 10px; height: 10px; display: block; }

.menubar { height: 31px; flex: none; display: flex; align-items: center; padding-left: 7px; }
.menus { display: flex; gap: 11px; margin-right: 12px; }
.tb { display: flex; align-items: center; gap: 4px; height: 24px; }
.tb .c { margin-left: 2px; }
.menubar > .tb { margin-right: 7px; }
.notice {
  flex: 1; align-self: stretch; display: flex; align-items: center; padding-left: 29px;
  background: linear-gradient(#fafafa, #f1f1f1); color: #0a6464; text-decoration: none; white-space: nowrap;
}
.account { width: 239px; align-self: stretch; display: flex; align-items: center; padding: 0 4px 0 3px; background: linear-gradient(#fafafa, #f1f1f1); }
.beans { margin: 0 8px 0 9px; }
.account .more { margin-top: 6px; }

.toolrow { height: 29px; flex: none; display: flex; gap: 2px; }
.strip { display: flex; align-items: center; background: linear-gradient(#fcfcfc, #efefef); }
.strip .more { margin-top: 5px; }
.toolrow .strip { gap: 7px; padding: 0 4px; flex: none; }
.files { width: 151px; }
.ops { width: 548px; }
.toolrow .views { flex: 1; min-width: 0; padding-left: 2px; }
.off { color: #7c7c7c; }
.sep { width: 1px; height: 20px; flex: none; background: #bdbdbd; }
.views .sep { margin: 0 -1px; }
.sigma { width: 16px; text-align: center; font: bold 14px/16px "DejaVu Serif", serif; }
.boxed { border: 1px solid #6c6c6c; padding: 0 2px 0 1px; margin-right: -3px; }
.tight .c { margin-left: -3px; }

.work { flex: 1; min-height: 0; display: flex; gap: 5px; padding-bottom: 2px; }
.navigator { width: 213px; flex: none; display: flex; flex-direction: column; gap: 1px; padding-top: 1px; }
.dockhead { height: 16px; flex: none; display: flex; align-items: center; gap: 10px; border: 1px solid #8a8a8a; padding-right: 4px; font-size: 13px; }
.dockhead span { margin-right: auto; }
.dockhead button, .dockhead svg { width: 8px; height: 9px; display: block; }
.navbody { flex: 1; min-height: 0; display: flex; flex-direction: column; border: 1px solid #9a9a9a; }
.navbtn { height: 22px; flex: none; border-bottom: 1px solid #9a9a9a; background: #f0f0f0; }
.navbtn:last-child { height: 21px; border-bottom: 0; }
.expand { height: 28px; flex: none; display: flex; align-items: center; gap: 7px; padding-left: 7px; background: linear-gradient(#fff, #ececec); }
.treebox { flex: 1; min-height: 0; display: flex; background: #fff; border: 1px solid #828790; margin: 0 1px 1px; }
.tree { flex: 1; min-width: 0; }
.group { --dots: repeating-linear-gradient(#8a8a8a 0 1px, #fff 1px 2px); }
.group > ul > li {
  height: 16px; display: flex; align-items: center; padding-left: 42px;
  background: var(--dots) 13px 0 / 1px 100% no-repeat, var(--dots) 32px 0 / 1px 100% no-repeat,
    repeating-linear-gradient(90deg, #8a8a8a 0 1px, #fff 1px 2px) 32px 8px / 10px 1px no-repeat;
}
.group > ul > li:last-child { background-size: 1px 100%, 1px 8px, 10px 1px; }
.end > ul > li { background-size: 0 0, 1px 100%, 10px 1px; }
.end > ul > li:last-child { background-size: 0 0, 1px 8px, 10px 1px; }
.cat { height: 16px; display: flex; align-items: center; gap: 5px; padding-left: 8px; }
.node { display: flex; align-items: center; height: 16px; padding: 0 1px; white-space: nowrap; }
.node .i { margin-right: 5px; }
.on.node { background: #d9d9d9; padding-right: 0; }
.newtag { align-self: flex-start; font: bold 8px/9px "DejaVu Sans", sans-serif; background: #ffe100; }
.vscroll { width: 16px; flex: none; display: flex; flex-direction: column; align-items: center; padding: 4px 0; background: #f0f0f0; }
.thumb { width: 100%; background: #cdcdcd; }
.nav-scroll .up { margin-bottom: auto; }
.nav-scroll .thumb { height: 214px; margin-bottom: 4px; }

.center { flex: 1; min-width: 0; display: flex; flex-direction: column; padding-top: 1px; }
.comps { height: 27px; flex: none; gap: 6px; padding: 0 4px; margin-right: 2px; }
.comps .sep + label { margin-left: -2px; }
.combo { position: relative; width: 50px; height: 22px; flex: none; background: #fff; }
.combo.wide { width: 62px; }
.combo select { width: 100%; height: 22px; appearance: none; padding-left: 3px; }
.combo .c { position: absolute; right: 3px; top: 9px; }
.comps .tb .c { margin-left: -2px; }
.panes { flex: 1; min-height: 0; display: flex; gap: 4px; padding-top: 3px; }
.complist { width: 183px; flex: none; display: flex; flex-direction: column; }
.search { display: flex; height: 27px; flex: none; padding: 2px 0 0 1px; background: #fff; }
.search input { width: 157px; height: 25px; border: 1px solid #7a7a7a; padding: 0 3px; }
.search input::placeholder { color: #767676; opacity: 1; }
.search button { flex: 1; display: flex; justify-content: center; align-items: center; }
.compbox { flex: 1; background: #fff; border: 1px solid #828790; padding-top: 2px; }
.root { height: 16px; display: flex; align-items: center; padding-left: 7px; }
.root .i { margin: 0 4px 0 6px; }
.items { --dots: repeating-linear-gradient(#8a8a8a 0 1px, #fff 1px 2px); }
.items li {
  height: 16px; display: flex; padding-left: 40px;
  background: var(--dots) 31px 0 / 1px 100% no-repeat,
    repeating-linear-gradient(90deg, #8a8a8a 0 1px, #fff 1px 2px) 31px 8px / 10px 1px no-repeat;
}
.items li:last-child { background-size: 1px 8px, 10px 1px; }
.item { display: flex; height: 16px; padding: 0 5px 0 2px; gap: 5px; }
.item.sel { background: #316ac5; }
.item .i { width: 15px; }

.props { flex: 1; min-width: 0; display: flex; flex-direction: column; margin: -3px 2px 0 0; }
.tabs { height: 22px; flex: none; display: flex; background: #fff; border-bottom: 1px solid #dcdcdc; }
.tab { width: 64px; height: 22px; background: #fff; border: 1px solid #dcdcdc; border-bottom-color: #fff; }
.gridbox { flex: 1; min-height: 0; display: flex; background: #fff; border: 1px solid #a0a0a0; margin: 3px 3px 1px 4px; padding: 1px 1px 1px 0; }
.grid { flex: 1; align-self: flex-start; table-layout: fixed; border-collapse: collapse; }
.n { width: 21px; }
.k { width: 191px; }
.grid th, .grid td { height: 19px; padding: 0; border: 1px solid #c0c0c0; border-left: 0; font-weight: 400; line-height: 18px; }
.grid s { line-height: 10px; }
.grid td { padding-left: 20px; }
.grid th { background: linear-gradient(#fff, #ebebeb); }
.grid thead th { height: 24px; }
.grid .cur th { background: #ffd58c; color: #600060; }
.grid .cur td { background: #0078d7; color: #fff; }
.link td { color: #00f; }
.dim td { color: #808080; }
.fold td:nth-child(2) { padding-left: 2px; }
.fold button {
  width: 13px; height: 13px; margin-right: 5px; vertical-align: -2px; border: 1px solid #b0b0b0;
  background: linear-gradient(#000, #000) center / 7px 1px no-repeat, linear-gradient(#000, #000) center / 1px 7px no-repeat;
}
.prop-scroll .thumb { height: 384px; margin: 4px 0 auto; }

.cell { display: flex; align-items: center; border: 1px solid #d6d6d6; background: linear-gradient(#fff, #f1f1f1); white-space: nowrap; padding-left: 1px; }
.status { height: 21px; flex: none; display: flex; gap: 2px; }
.s1 { width: 148px; } .s2 { width: 78px; } .s3 { width: 98px; } .s4 { width: 48px; } .s5 { flex: 1; } .s6 { width: 72px; }

.dialog {
  position: absolute; left: 587px; right: 22px; top: 83px; bottom: 25px;
  display: flex; flex-direction: column; padding: 0 7px 7px;
  border: 1px solid #2c3338; border-top-color: #f0f0f0; background: #b9d1ea; box-shadow: inset -1px -1px #4fd0f5;
}
.dialog h2 { height: 29px; flex: none; margin: 0 -7px; padding: 9px 7px 0; font-size: 12px; font-weight: 400; background: linear-gradient(#99b4d1, #b9d1ea); }
.client { flex: 1; min-height: 0; display: flex; flex-direction: column; background: #f0f0f0; }
.dtabs { height: 20px; flex: none; display: flex; align-items: flex-end; padding-left: 2px; }
.dtab { width: 41px; height: 18px; border: 1px solid #dadada; border-bottom: 0; padding-right: 4px; }
.dtab.on { width: 45px; height: 20px; background: #fff; padding: 0 8px 2px 0; }
.page { flex: 1; min-height: 0; display: flex; border: 1px solid #dcdcdc; padding: 3px 1px 1px 3px; background: #fff; margin: 0 2px 3px 1px; }
.pagein { flex: 1; min-width: 0; display: flex; flex-direction: column; align-items: flex-start; background: #f0f0f0; padding-top: 1px; }
.dt { height: 28px; flex: none; gap: 5px; padding: 0 4px 0 1px; background: linear-gradient(#fdfdfd, #f2f2f2); }
.dt .sep { margin: 0 -2px; }
.dt .tb { margin-left: 3px; }
.dt > .c { margin: 0 -1px 0 -3px; }
.dt .wide-gap .c { margin-left: 4px; }
.tg { width: 34px; height: 23px; display: flex; align-items: center; justify-content: center; gap: 4px; border: 1px solid #0078d7; background: #dcebf7; }
.tg.small { width: 22px; }
.tg.plain { border-color: transparent; background: none; }
.second { gap: 4px; }
.second .tg { margin-left: -3px; }
.second .tg:first-child { margin-left: 0; }
.canvas { position: relative; flex: 1; min-height: 0; align-self: stretch; border: 2px solid #f00; background: #14171e; overflow: hidden; }
.drawing { width: 100%; height: 100%; }
.drawing text { font-family: "Noto Sans CJK SC", sans-serif; }
.dims { font-size: 14px; }
.ghost { font-size: 13px; fill: #363a42; }
.len { font-size: 10px; fill: #0f0; }
.drawing .note { font-size: 28px; font-weight: 300; fill: #c4c8cc; }
.drawing .green { fill: #0f0; }
.coords { position: absolute; left: 2px; top: 23px; display: flex; gap: 5px; }
.coords input { width: 60px; height: 19px; border: 1px solid #6a6a6a; padding: 0 1px; color: #fff; }
.coords .cx { background: #14105a; color: #ccc; }
.coords .cy { background: linear-gradient(90deg, #0078d7 44px, #ff8c28 44px 45px, transparent 45px) 1px 1px / 100% 14px no-repeat #fff; }
.snap { gap: 0; }
.snap .tg { width: 52px; }
.snap .tg + .tg { width: 75px; margin-left: -1px; }
.snap .tb { margin-left: 7px; }
.dstatus { height: 23px; flex: none; display: flex; gap: 3px; }
.pos { width: 97px; padding-left: 4px; }
.hint { flex: 1; }
.grip { width: 12px; height: 12px; margin: auto 0 0 auto; }

.ime { position: absolute; left: 968px; top: 0; width: 207px; height: 28px; }
.blob { position: absolute; left: 3px; top: -46px; width: 48px; height: 49px; border-radius: 0 0 24px 24px; background: #4cc65c; }
.slogo { position: absolute; left: 0; top: 0; width: 28px; height: 28px; z-index: 1; }
.imebar { position: absolute; left: 14px; right: 0; top: 3px; height: 24px; display: flex; align-items: center; gap: 6px; padding-left: 18px; border: 1px solid #a9bfe0; background: #fff; }
.imebar b { font-size: 15px; line-height: 20px; color: #1f72cc; }
.imebar svg { width: 16px; height: 16px; }

.taskbar { height: 40px; flex: none; display: flex; background: #020d12; color: #fff; }
.start { width: 48px; background: #000; display: flex; align-items: center; justify-content: center; }
.start svg { width: 16px; height: 16px; }
.cortana { width: 344px; display: flex; align-items: center; gap: 5px; padding: 0 14px 0 9px; background: #333; }
.ring { width: 22px; height: 22px; }
.cortana input { flex: 1; min-width: 0; font-size: 14px; line-height: 20px; }
.cortana input::placeholder { color: #9a9a9a; opacity: 1; }
.mic { width: 12px; height: 18px; }
.tasks { display: flex; }
.tasks button { width: 50px; display: flex; align-items: center; justify-content: center; }
.tasks svg { width: 24px; height: 24px; }
.tasks .run { background: linear-gradient(#76b9ed, #76b9ed) bottom / 40px 3px no-repeat; }
.tasks .active { background: linear-gradient(#76b9ed, #76b9ed) bottom / 48px 3px no-repeat, linear-gradient(#3a4145, #3a4145) center / 48px 100% no-repeat; }
.tray { margin-left: auto; display: flex; align-items: center; gap: 8px; padding-right: 16px; }
.tray svg { width: 16px; height: 16px; }
.tray .kb { width: 24px; }
.zh { width: 16px; text-align: center; font-size: 13px; }
.tray time { width: 64px; text-align: center; line-height: 20px; margin: 0 8px 0 10px; }
.tray .act { width: 26px; height: 26px; }
.act text { font-size: 12px; }
```
